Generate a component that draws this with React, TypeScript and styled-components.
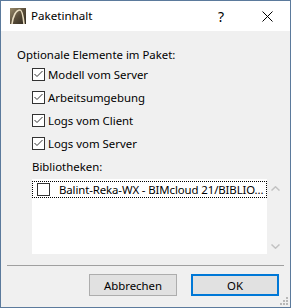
import React from 'react';
import styled, { createGlobalStyle } from 'styled-components';

const GlobalStyle = createGlobalStyle`
  html, body {
    margin: 0;
    padding: 0;
    background: #f0f0f0;
  }
  body {
    font-family: 'Noto Sans', 'Liberation Sans', sans-serif;
    font-size: 11.4px;
    color: #000;
  }
`;

const OPTIONS = ['Modell vom Server', 'Arbeitsumgebung', 'Logs vom Client', 'Logs vom Server'];

const Window = styled.div`
  width: 291px;
  height: 308px;
  box-sizing: border-box;
  border: 1px solid #5b7a9c;
  background: #f0f0f0;
  display: flex;
  flex-direction: column;
  position: relative;
`;

const TitleBar = styled.div`
  height: 30px;
  background: #fff;
  display: flex;
  align-items: center;
  padding-left: 9px;
`;

const Title = styled.span`
  margin-left: 5px;
  flex: 1;
  font-size: 11.6px;
  line-height: 16px;
`;

const CaptionButton = styled.div`
  width: 46px;
  height: 30px;
  display: flex;
  align-items: center;
  justify-content: center;
  font-size: 14px;
`;

const Content = styled.div`
  flex: 1;
  display: flex;
  flex-direction: column;
  padding: 16px 6px 0 16px;
`;

const Label = styled.div<{ $indent?: number }>`
  line-height: 16px;
  padding-left: ${(p) => p.$indent || 0}px;
`;

const CheckList = styled.div`
  display: flex;
  flex-direction: column;
  padding-left: 15px;
  margin-bottom: 4px;
`;

const CheckRow = styled.div`
  height: 23px;
  display: flex;
  align-items: center;
  gap: 3px;
`;

const Box = styled.span`
  width: 13px;
  height: 13px;
  box-sizing: border-box;
  border: 1px solid #333;
  background: #fff;
  display: inline-flex;
  align-items: center;
  justify-content: center;
  flex: none;
`;

const ListArea = styled.div`
  margin: 4px 0 0 15px;
  height: 75px;
  display: flex;
`;

const ListBody = styled.div`
  flex: 1;
  background: #fff;
  padding-top: 2px;
`;

const ListItem = styled.div`
  height: 17px;
  box-sizing: border-box;
  border: 1px dotted #000;
  display: flex;
  align-items: center;
  padding-left: 4px;
  gap: 9px;
  white-space: nowrap;
  overflow: hidden;
  letter-spacing: -0.1px;
`;

const ScrollBar = styled.div`
  width: 17px;
  display: flex;
  flex-direction: column;
  justify-content: space-between;
  align-items: center;
  padding: 7px 0 5px;
`;

const Separator = styled.div`
  height: 1px;
  background: #a0a0a0;
  margin: 11px 0 0 -10px;
`;

const ButtonRow = styled.div`
  display: flex;
  justify-content: flex-end;
  gap: 14px;
  padding: 8px 5px 0 0;
`;

const Button = styled.div<{ $primary?: boolean }>`
  width: 88px;
  height: 22px;
  box-sizing: border-box;
  border: ${(p) => (p.$primary ? '2px solid #0078d7' : '1px solid #adadad')};
  background: #e1e1e1;
  display: flex;
  align-items: center;
  justify-content: center;
`;

const Grip = styled.svg`
  position: absolute;
  right: 2px;
  bottom: 2px;
`;

const Check = () => (
  <svg width="11" height="11" viewBox="0 0 11 11">
    <path d="M1.5 5 L4 7.5 L9.5 2" fill="none" stroke="#333" strokeWidth="1" />
  </svg>
);

const Chevron = ({ up }: { up?: boolean }) => (
  <svg width="9" height="5" viewBox="0 0 9 5">
    <path
      d={up ? 'M0.5 4.5 L4.5 0.8 L8.5 4.5' : 'M0.5 0.5 L4.5 4.2 L8.5 0.5'}
      fill="none"
      stroke="#c2c2c2"
      strokeWidth="1.5"
    />
  </svg>
);

const AppIcon = () => (
  <svg width="16" height="16" viewBox="0 0 16 16">
    <defs>
      <linearGradient id="ic" x1="0" y1="0" x2="1" y2="1">
        <stop offset="0" stopColor="#9a8c6c" />
        <stop offset="0.5" stopColor="#5a4e3a" />
        <stop offset="1" stopColor="#2e281e" />
      </linearGradient>
    </defs>
    <rect width="16" height="16" fill="url(#ic)" />
    <path d="M2 16 C3 8 6 2 10 2 C12 2 13 6 14 16" fill="none" stroke="#e8dcc0" strokeWidth="1.6" />
  </svg>
);

const App: React.FC = () => (
  <>
    <GlobalStyle />
    <Window>
      <TitleBar>
        <AppIcon />
        <Title>Paketinhalt</Title>
        <CaptionButton>?</CaptionButton>
        <CaptionButton>
          <svg width="11" height="11" viewBox="0 0 11 11">
            <path d="M0.5 0.5 L10.5 10.5 M10.5 0.5 L0.5 10.5" stroke="#000" strokeWidth="1" />
          </svg>
        </CaptionButton>
      </TitleBar>
      <Content>
        <Label>Optionale Elemente im Paket:</Label>
        <CheckList>
          {OPTIONS.map((o) => (
            <CheckRow key={o}>
              <Box>
                <Check />
              </Box>
              {o}
            </CheckRow>
          ))}
        </CheckList>
        <Label $indent={15}>Bibliotheken:</Label>
        <ListArea>
          <ListBody>
            <ListItem>
              <Box />
              Balint-Reka-WX - BIMcloud 21/BIBLIO...
            </ListItem>
          </ListBody>
          <ScrollBar>
            <Chevron up />
            <Chevron />
          </ScrollBar>
        </ListArea>
        <Separator />
        <ButtonRow>
          <Button>Abbrechen</Button>
          <Button $primary>OK</Button>
        </ButtonRow>
      </Content>
      <Grip width="8" height="8" viewBox="0 0 8 8">
        {[
          [6, 0],
          [3, 3],
          [6, 3],
          [0, 6],
          [3, 6],
          [6, 6],
        ].map(([x, y]) => (
          <rect key={`${x}-${y}`} x={x} y={y} width="2" height="2" fill="#b8b8b8" />
        ))}
      </Grip>
    </Window>
  </>
);

export default App;
